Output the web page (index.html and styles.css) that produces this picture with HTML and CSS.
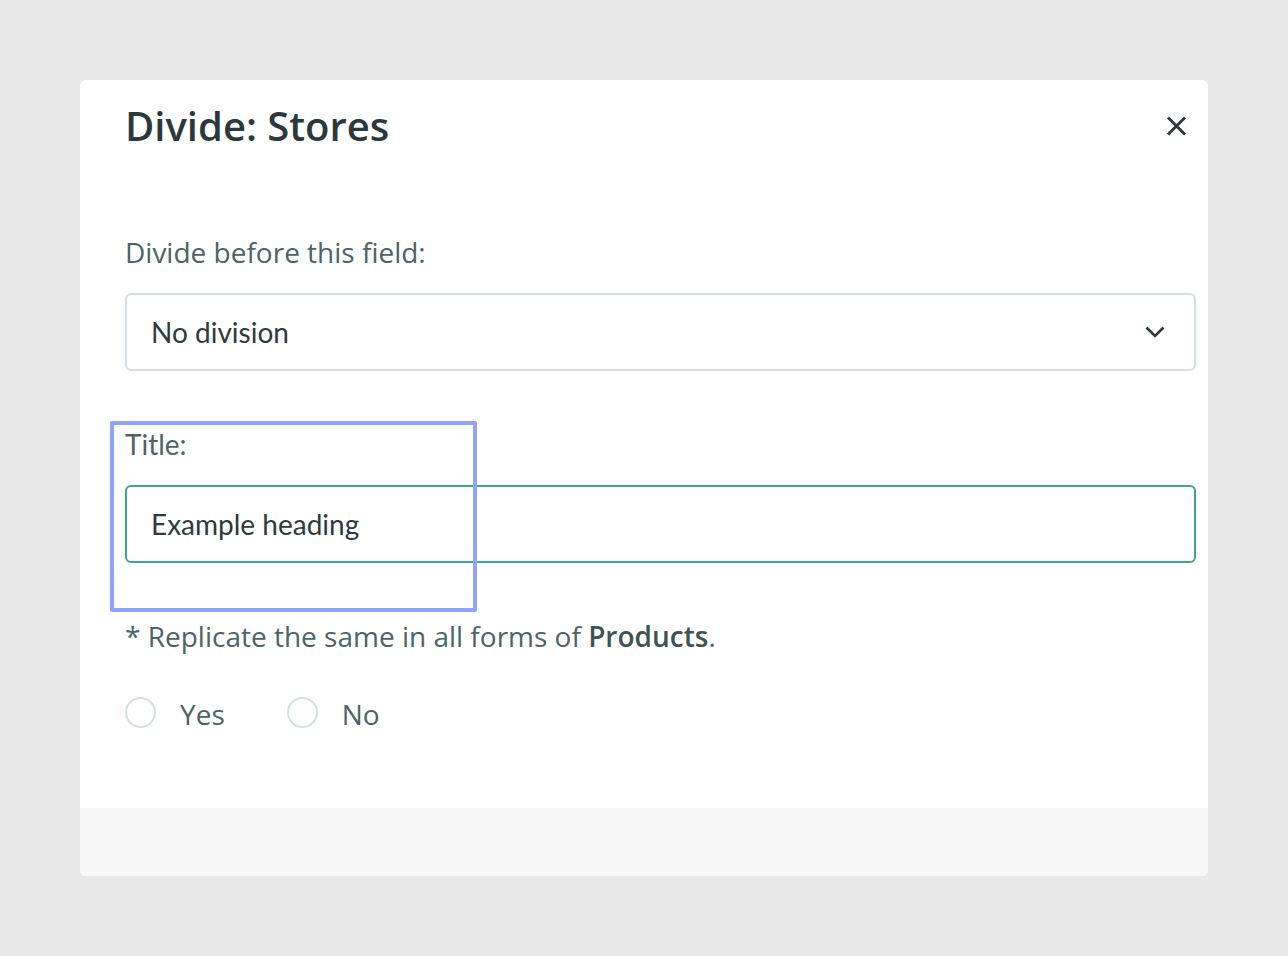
FILE: index.html
```html
<!DOCTYPE html>
<html>

<head>
    <meta charset="utf-8">
    <title>Divide: Stores</title>
    <meta name="viewport" content="width=device-width">
    <link rel="stylesheet" href="styles.css">
</head>

<body>
    <div class="modal">
        <div class="modal-head">
            <h1>Divide: Stores</h1>
            <button class="close" aria-label="Close">
                <svg width="21" height="20" viewBox="0 0 21 20">
                    <path d="M2 1.5 L19 18.5 M19 1.5 L2 18.5" stroke="#2c3a3f" stroke-width="3" fill="none" />
                </svg>
            </button>
        </div>

        <div class="modal-body">
            <label class="label">Divide before this field:</label>
            <div class="select">
                <span>No division</span>
                <svg width="20" height="12" viewBox="0 0 20 12">
                    <path d="M1.5 1.5 L10 10 L18.5 1.5" stroke="#2c3a3f" stroke-width="2.6" fill="none" />
                </svg>
            </div>

            <label class="label title-label">Title:</label>
            <div class="input">Example heading</div>

            <p class="note">* Replicate the same in all forms of <b>Products</b>.</p>

            <div class="radios">
                <label class="radio"><span class="dot"></span>Yes</label>
                <label class="radio"><span class="dot"></span>No</label>
            </div>
        </div>

        <div class="modal-foot"></div>

        <div class="highlight"></div>
    </div>
</body>

</html>
```

FILE: styles.css
```css
body {
    margin: 0;
    padding: 80px;
    background-color: #e8e8e8;
    font-family: 'Open Sans', 'Noto Sans', sans-serif;
}

.modal {
    position: relative;
    width: 1128px;
    height: 796px;
    background-color: white;
    border-radius: 6px;
    display: flex;
    flex-direction: column;
    overflow: hidden;
}

.modal-head {
    display: flex;
    align-items: center;
    justify-content: space-between;
    padding: 22px 21px 0 45px;
}

h1 {
    margin: 0;
    font-size: 40px;
    line-height: 48px;
    font-weight: 600;
    color: #2b393d;
}

.close {
    border: none;
    background: none;
    padding: 0;
    display: flex;
}

.modal-body {
    flex: 1;
    padding: 84px 12px 0 45px;
    display: flex;
    flex-direction: column;
    align-items: stretch;
}

.label {
    font-size: 28px;
    line-height: 36px;
    color: #4b6467;
}

.title-label {
    margin-top: 55px;
    font-family: Lato, 'Open Sans', sans-serif;
}

.select,
.input {
    margin-top: 23px;
    height: 74px;
    border: 2px solid #d5dfe1;
    border-radius: 6px;
    padding: 0 29px 0 24px;
    display: flex;
    align-items: center;
    justify-content: space-between;
    font-family: Lato, 'Open Sans', sans-serif;
    font-size: 28px;
    color: #2d3a3e;
}

.input {
    border-color: #3ea68c;
}

.note {
    margin: 55px 0 0 0;
    font-size: 28px;
    line-height: 36px;
    color: #4b6467;
}

.note b {
    font-weight: 600;
    color: #3d5356;
}

.radios {
    margin-top: 42px;
    display: flex;
    gap: 62px;
}

.radio {
    display: flex;
    align-items: center;
    gap: 24px;
    height: 36px;
    font-size: 28px;
    line-height: 36px;
    color: #4b6467;
}

.dot {
    width: 27px;
    height: 27px;
    border: 2px solid #d6e0e2;
    border-radius: 50%;
    margin-top: -3px;
}

.modal-foot {
    height: 68px;
    background-color: #f7f7f7;
}

.highlight {
    position: absolute;
    left: 30px;
    top: 341px;
    width: 359px;
    height: 183px;
    border: 4px solid #8ea3ff;
    border-radius: 2px;
}
```
